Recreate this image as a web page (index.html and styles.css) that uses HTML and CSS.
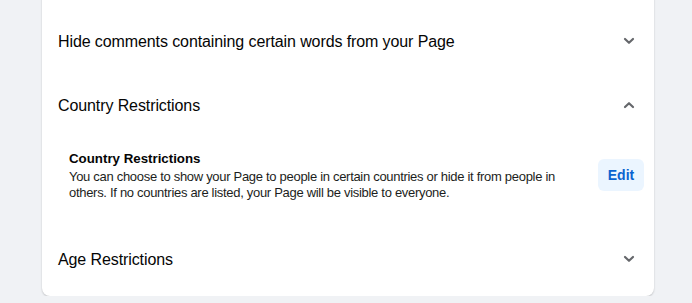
FILE: index.html
```html
<!DOCTYPE html>
<html lang="en">
<head>
    <meta charset="UTF-8">
    <title>Page Settings</title>
    <link rel="stylesheet" href="styles.css">
</head>
<body>

    <div class="card">
        <div class="row">
            <span class="row-title">Hide comments containing certain words from your Page</span>
            <svg class="chevron" width="12" height="8" viewBox="0 0 12 8"><path d="M2 2 L6 5.8 L10 2" fill="none" stroke="#65676b" stroke-width="2.2" stroke-linecap="round" stroke-linejoin="round"/></svg>
        </div>

        <div class="row">
            <span class="row-title">Country Restrictions</span>
            <svg class="chevron" width="12" height="8" viewBox="0 0 12 8"><path d="M2 6 L6 2.2 L10 6" fill="none" stroke="#65676b" stroke-width="2.2" stroke-linecap="round" stroke-linejoin="round"/></svg>
        </div>

        <div class="section-body">
            <div class="section-text">
                <div class="section-title">Country Restrictions</div>
                <div class="section-desc">You can choose to show your Page to people in certain countries or hide it from people in others. If no countries are listed, your Page will be visible to everyone.</div>
            </div>
            <button class="edit-btn">Edit</button>
        </div>

        <div class="row">
            <span class="row-title">Age Restrictions</span>
            <svg class="chevron" width="12" height="8" viewBox="0 0 12 8"><path d="M2 2 L6 5.8 L10 2" fill="none" stroke="#65676b" stroke-width="2.2" stroke-linecap="round" stroke-linejoin="round"/></svg>
        </div>
    </div>

</body>
</html>
```

FILE: styles.css
```css
body {
    margin: 0;
    background: #f0f2f5;
    font-family: 'Liberation Sans', Arial, sans-serif;
    color: #050505;
}

.card {
    width: 612px;
    margin: -10px 0 0 42px;
    padding: 19px 0 5px 0;
    background: #fff;
    border-radius: 8px;
    box-shadow: 0 1px 2px rgba(0, 0, 0, 0.2);
}

.row {
    height: 64px;
    display: flex;
    align-items: center;
    justify-content: space-between;
    padding: 0 19px 0 16px;
}

.row-title {
    font-size: 16px;
    letter-spacing: -0.1px;
    line-height: 22px;
    padding-top: 1px;
}

.chevron {
    display: block;
}

.section-body {
    display: flex;
    align-items: center;
    justify-content: space-between;
    padding: 12px 10px 26px 27px;
}

.section-text {
    width: 490px;
}

.section-title {
    font-size: 13.3px;
    font-weight: bold;
    line-height: 20px;
}

.section-desc {
    font-size: 13px;
    letter-spacing: -0.3px;
    line-height: 16px;
    color: #1c1e21;
}

.edit-btn {
    width: 46px;
    height: 32px;
    border: none;
    border-radius: 6px;
    background: #ebf5ff;
    color: #0a63d0;
    font-family: 'Liberation Sans', Arial, sans-serif;
    font-size: 14px;
    font-weight: bold;
    padding: 0;
}
```
